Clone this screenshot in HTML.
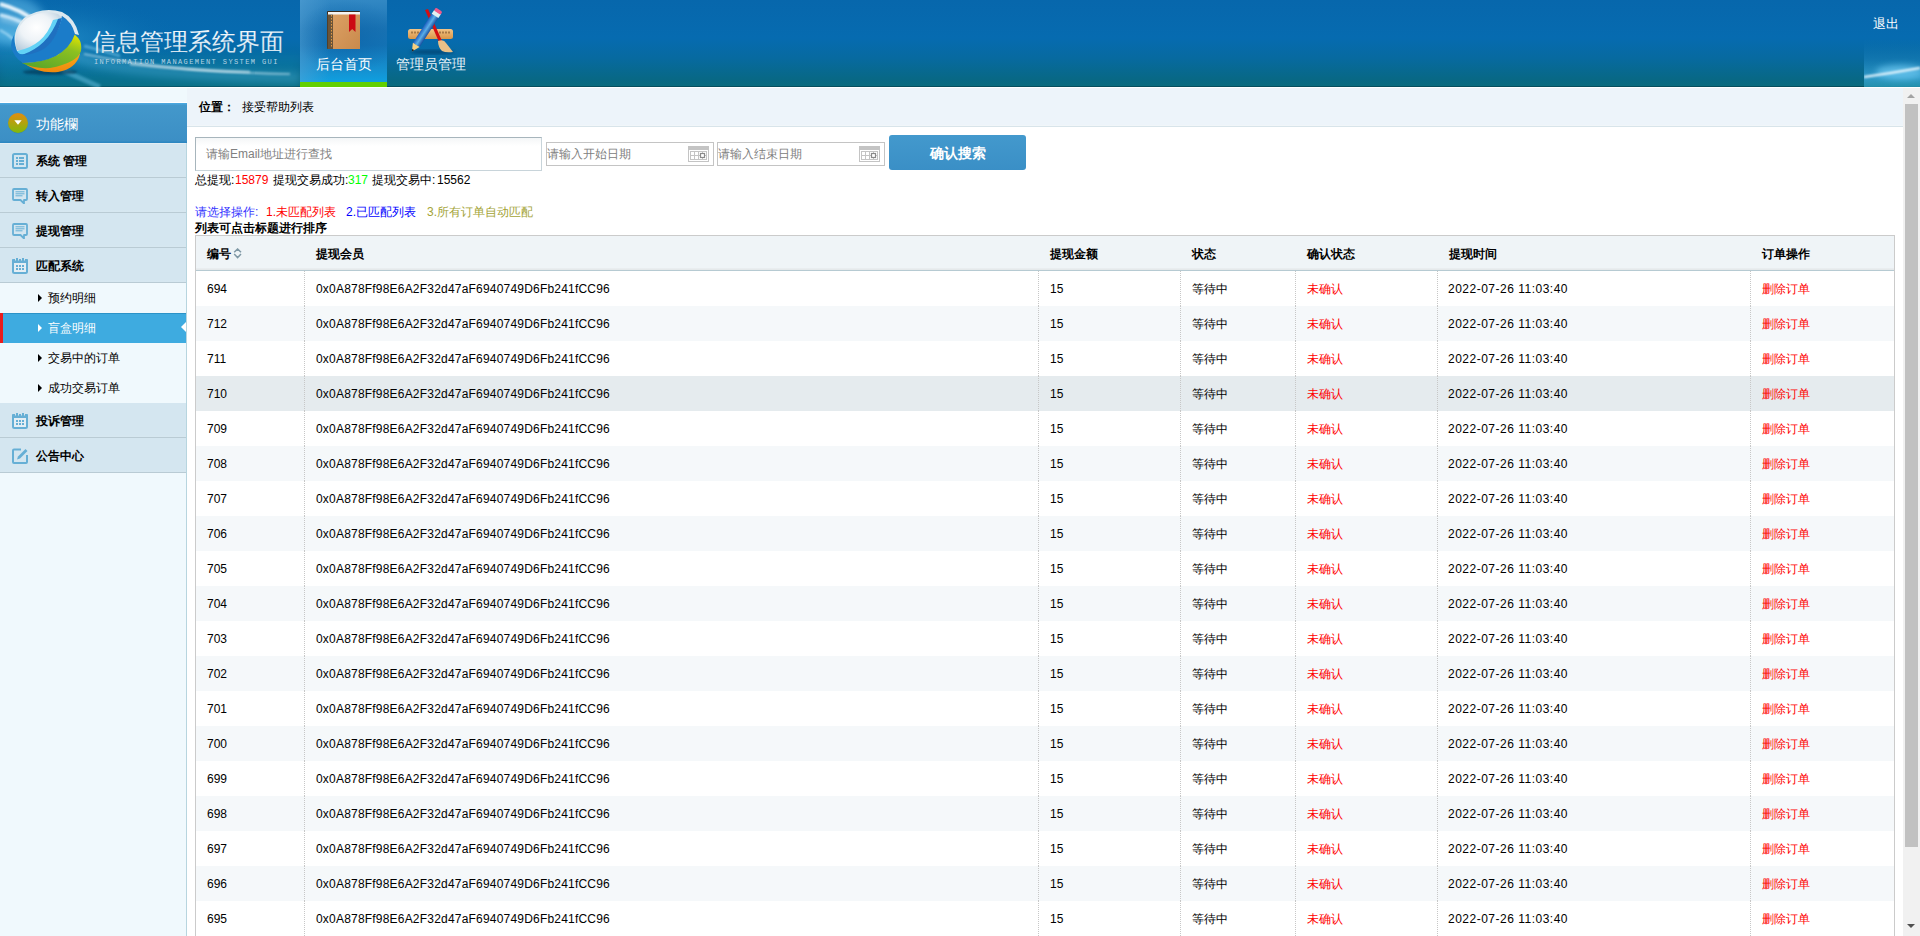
<!DOCTYPE html><html><head><meta charset="utf-8"><style>
*{margin:0;padding:0}
html,body{width:1920px;height:936px;overflow:hidden;background:#fff;font-family:"Liberation Sans",sans-serif;font-size:12px;color:#000}
.a{position:absolute}
#top{position:absolute;left:0;top:0;width:1920px;height:87px;
 background:linear-gradient(to bottom,#0767ac 0px,#066bb0 38px,#076aa0 58px,#086884 80px,#0a6b7e 86px,#064e5e 86px,#064e5e 87px)}
#topline{position:absolute;left:0;top:87px;width:1920px;height:1px;background:#fff}
.navt{top:55px;width:87px;text-align:center;font-size:14px;line-height:18px;color:#e6f2f8}
#left{position:absolute;left:0;top:88px;width:187px;height:848px;background:#f0f9fd}
#lbd{position:absolute;left:186px;top:55px;width:1px;height:793px;background:#b7d5df}
.dd{position:absolute;left:0;width:186px;height:34px;border-bottom:1px solid #b9cbd4;background:linear-gradient(#d4e6f0 0,#d4e6f0 32px,#d6e7f0 33px);font-weight:bold;font-size:12px;line-height:37px;color:#000}
.dd .t{position:absolute;left:36px;top:0}
.dd svg{position:absolute;left:12px;top:10px}
.sub{position:absolute;left:0;width:186px;height:30px;line-height:30px;font-size:12px;color:#000}
.sub .tri{position:absolute;left:38px;top:11px;width:0;height:0;border-left:4px solid #000;border-top:4px solid transparent;border-bottom:4px solid transparent}
.sub .t{position:absolute;left:48px;top:0}
.sub.active{background:linear-gradient(#2b93c8 0,#2b93c8 1px,#3eabe0 1px);color:#fff}
.sub.active .tri{border-left-color:#fff}
.place{position:absolute;left:187px;top:88px;width:1716px;height:38px;background:linear-gradient(#edf4fa 0,#edf4fa 37px,#f1f6f9 37px);border-bottom:1px solid #d8e4ea}
#sb{position:absolute;left:1903px;top:88px;width:17px;height:848px;background:#f1f1f1}
.th{position:absolute;top:236px;height:34px;line-height:36px;font-weight:bold}
.row{position:absolute;left:196px;width:1698px;height:35px;line-height:35px}
.row.odd{background:#f5f8fa}
.row.hov{background:#e5ebee}
.c{position:absolute;top:0;height:35px;line-height:37px;border-right:1px dotted #c7c7c7;text-indent:11px;white-space:nowrap}
.ad{letter-spacing:0.2px}
.dt{letter-spacing:0.5px;margin-left:-1px}
.red{color:#f00}
.date{position:absolute;top:142px;width:166px;height:22px;border:1px solid #c4c4c4;background:#fff;color:#808080;line-height:22px;font-size:12px}
</style></head><body>
<div id="top">
<svg class="a" style="left:0;top:0" width="300" height="87" viewBox="0 0 300 87">
<defs>
<radialGradient id="lg1" cx="0.12" cy="0.45" r="0.5"><stop offset="0" stop-color="#3fb0e0" stop-opacity="0.55"/><stop offset="1" stop-color="#0a6aa8" stop-opacity="0"/></radialGradient>
<radialGradient id="sph" cx="0.45" cy="0.4" r="0.7"><stop offset="0" stop-color="#ffffff"/><stop offset="0.5" stop-color="#eef3f7"/><stop offset="1" stop-color="#b4cadb"/></radialGradient>
<linearGradient id="grn" x1="0.8" y1="0" x2="0.2" y2="1"><stop offset="0" stop-color="#e0e400"/><stop offset="0.35" stop-color="#8cc021"/><stop offset="1" stop-color="#5aa62a"/></linearGradient>
<linearGradient id="org" x1="0" y1="0" x2="0" y2="1"><stop offset="0" stop-color="#f8b41a"/><stop offset="1" stop-color="#f0880e"/></linearGradient>
<linearGradient id="blu" x1="0" y1="0" x2="0" y2="1"><stop offset="0" stop-color="#1e78c4"/><stop offset="1" stop-color="#1a7cca"/></linearGradient>
<filter id="bl" x="-20%" y="-50%" width="140%" height="200%"><feGaussianBlur stdDeviation="1.2"/></filter>
<filter id="bl2" x="-20%" y="-50%" width="140%" height="200%"><feGaussianBlur stdDeviation="4"/></filter>
<filter id="bl3" x="-50%" y="-50%" width="200%" height="200%"><feGaussianBlur stdDeviation="2.5"/></filter>
<linearGradient id="ttl" x1="0" y1="0" x2="0" y2="1"><stop offset="0" stop-color="#f4f9fc"/><stop offset="1" stop-color="#cfe1ec"/></linearGradient>
</defs>
<rect x="0" y="0" width="300" height="87" fill="url(#lg1)"/>
<rect x="0" y="55" width="300" height="32" fill="#0e8ab0" opacity="0.25" filter="url(#bl2)"/>
<path d="M-5 30 Q40 42 80 58 T300 78" stroke="#6cc8f0" stroke-width="10" fill="none" opacity="0.3" filter="url(#bl2)"/>
<ellipse cx="10" cy="20" rx="34" ry="24" fill="#6cc4f0" opacity="0.5" filter="url(#bl2)"/>
<path d="M0 4 Q22 10 36 22" stroke="#f4fbff" stroke-width="4" fill="none" opacity="0.9" filter="url(#bl)"/>
<path d="M0 15 Q18 19 28 26" stroke="#e8f6ff" stroke-width="3.5" fill="none" opacity="0.8" filter="url(#bl)"/>
<path d="M0 30 Q8 34 14 40" stroke="#c8ecff" stroke-width="2" fill="none" opacity="0.6" filter="url(#bl)"/>
<path d="M0 18 Q20 22 40 30" stroke="#bfe6fb" stroke-width="6" fill="none" opacity="0.45" filter="url(#bl3)"/>
<path d="M84 54 Q170 72 290 74" stroke="#e6f7ff" stroke-width="1.6" fill="none" opacity="0.6" filter="url(#bl)"/>
<path d="M130 64 Q190 71 250 72" stroke="#ffffff" stroke-width="2.5" fill="none" opacity="0.5" filter="url(#bl)"/>
<path d="M62 70 Q80 78 100 87" stroke="#6fc6ea" stroke-width="5" fill="none" opacity="0.45" filter="url(#bl)"/>
<path d="M84 46 Q100 50 120 56" stroke="#8fd6f5" stroke-width="3" fill="none" opacity="0.45" filter="url(#bl)"/>
<ellipse cx="50" cy="72" rx="27" ry="3" fill="#002a48" opacity="0.55" filter="url(#bl)"/>
<path d="M22 62 Q38 74 58 72 Q76 69 80 54 L70 48 Q50 62 22 62Z" fill="url(#org)"/>
<path d="M72 33 Q83 39 81 51 Q77 63 50 68 Q34 69 22 63 Q46 62 58 54 Q70 46 72 33Z" fill="url(#grn)"/>
<path d="M72 33 Q70 47 58 55 Q44 62 22 63 Q46 60 56 52 Q68 44 72 33Z" fill="#d8e200"/>
<path d="M62 16 Q73 22 75 34 Q70 48 56 56 Q42 63 23 63 Q13 57 11 46 Q11 40 14 35 Q14 46 18 51 Q42 46 55 26Z" fill="#1b7cc9"/>
<path d="M17 51 Q10 32 24 18 Q42 6 62 12 Q75 18 79 35 L75 34 Q72 22 62 16 Q52 40 40 47 Q28 52 17 51Z" fill="#dce8ef"/>
<path d="M17 50 Q12 32 26 19 Q42 9 58 14 L62 18 Q52 40 40 47 Q28 52 17 50Z" fill="url(#sph)"/>
<path d="M53 20 L62 18 Q56 40 42 49 Q30 55 20 54 Q18 53 17 51 Q44 46 53 20Z" fill="#62d2f6"/>
<path d="M58 19 L62 18 Q56 42 42 50 Q32 55 22 55 Q48 46 58 19Z" fill="#1f70c0"/>
<text x="92" y="50" font-family="Liberation Sans" font-size="24" fill="url(#ttl)">信息管理系统界面</text>
<text x="94" y="63.5" font-family="Liberation Mono" font-size="7" letter-spacing="1.4" fill="#b6d3e3">INFORMATION MANAGEMENT SYSTEM GUI</text>
</svg>
<div class="a" style="left:300px;top:0;width:87px;height:82px;background:radial-gradient(ellipse 60% 45% at 55% 45%,rgba(10,95,165,0.55),rgba(10,95,165,0)),linear-gradient(to right,rgba(90,165,215,0.5),rgba(90,165,215,0) 35%),linear-gradient(to bottom,#3288c4 0%,#1a74b4 35%,#1474b6 55%,#1590d0 85%,#0fa0e0 100%)"></div>
<div class="a" style="left:300px;top:82px;width:87px;height:5px;background:#62cf02"></div>
<svg class="a" style="left:326px;top:10px" width="36" height="42" viewBox="0 0 36 42">
<defs><linearGradient id="bk" x1="0" y1="0" x2="1" y2="1"><stop offset="0" stop-color="#dca064"/><stop offset="1" stop-color="#c98a4c"/></linearGradient></defs>
<rect x="1" y="1" width="33" height="38" rx="1" fill="#3b2c1e"/>
<rect x="7" y="4" width="27" height="35" fill="url(#bk)"/>
<rect x="1.5" y="4" width="5.5" height="35" fill="#6b5439"/>
<line x1="5.5" y1="5" x2="5.5" y2="38" stroke="#e39a45" stroke-width="1" stroke-dasharray="1.5 1.5"/>
<rect x="2" y="2" width="32" height="2.5" fill="#f5f5f5"/>
<path d="M23 4.5H29.5V22L26.2 19L23 22Z" fill="#cc0a14"/>
</svg>
<svg class="a" style="left:404px;top:6px" width="54" height="50" viewBox="0 0 54 50">
<defs><linearGradient id="rl" x1="0" y1="0" x2="0" y2="1"><stop offset="0" stop-color="#f2c486"/><stop offset="1" stop-color="#d99648"/></linearGradient>
<linearGradient id="pc" x1="0" y1="0" x2="1" y2="0"><stop offset="0" stop-color="#1e5fc0"/><stop offset="0.5" stop-color="#5aaee8"/><stop offset="1" stop-color="#1a4fa0"/></linearGradient>
<filter id="sh"><feGaussianBlur stdDeviation="1.5"/></filter></defs>
<ellipse cx="28" cy="46" rx="22" ry="2.5" fill="#003a66" opacity="0.6" filter="url(#sh)"/>
<rect x="4" y="23" width="45" height="10" rx="2.5" fill="url(#rl)"/>
<path d="M8 25.5V27.5M11 25.5V27.5M14 25.5V27.5M36 25.5V27.5M39 25.5V27.5M42 25.5V27.5M45 25.5V27.5" stroke="#6b4018" stroke-width="1"/>
<path d="M21 4 L24 3 L38 35 L35 36Z" fill="#d40f12"/>
<path d="M34 35 Q40 33 42 37 Q46 42 49 46 Q42 47 38 45 Q34 41 34 35Z" fill="#e8c088"/>
<g transform="rotate(33 20 26)"><rect x="16.5" y="5" width="8" height="36" fill="url(#pc)"/><rect x="16.5" y="2" width="8" height="4.5" fill="#e0f0f0"/><rect x="16.5" y="-1" width="8" height="3.5" rx="1.5" fill="#f05a8a"/><path d="M16.5 41 L24.5 41 L20.5 49Z" fill="#f8d080"/><path d="M19.2 46.5 L21.8 46.5 L20.5 49Z" fill="#222"/></g>
</svg>
<div class="a navt" style="left:300px;color:#fff">后台首页</div>
<div class="a navt" style="left:387px">管理员管理</div>
<svg class="a" style="left:1864px;top:0" width="56" height="87" viewBox="0 0 56 87">
<defs><linearGradient id="rh" x1="0" y1="0" x2="0" y2="1"><stop offset="0" stop-color="#0a70b0" stop-opacity="0"/><stop offset="0.45" stop-color="#1a80bb" stop-opacity="0.6"/><stop offset="0.8" stop-color="#3aa6d8" stop-opacity="0.8"/><stop offset="1" stop-color="#2a9ab8" stop-opacity="0.8"/></linearGradient>
<filter id="rb" x="-50%" y="-200%" width="200%" height="500%"><feGaussianBlur stdDeviation="0.8"/></filter><filter id="rb2" x="-50%" y="-100%" width="200%" height="300%"><feGaussianBlur stdDeviation="3"/></filter></defs>
<rect x="0" y="38" width="56" height="49" fill="url(#rh)"/>
<ellipse cx="36" cy="72" rx="24" ry="7" fill="#7fd8ff" opacity="0.6" filter="url(#rb2)"/>
<path d="M0 77 Q28 73 56 68" stroke="#f4fbff" stroke-width="2.2" fill="none" filter="url(#rb)"/>
</svg>
<div class="a" style="left:1873px;top:15px;color:#fff;font-size:13px;line-height:18px">退出</div>
</div><div id="topline"></div>
<div id="left">
<div id="lbd"></div><div class="a" style="left:0;top:14px;width:187px;height:1px;background:#fff"></div><div class="a" style="left:0;top:15px;width:187px;height:40px;background:linear-gradient(#4ba7de 0,#4ba7de 1px,#4398cb 2px,#3c8fc5 38px,#2d87c1 39px,#2d87c1 40px);color:#fff;font-size:14px;line-height:40px"><svg class="a" style="left:7px;top:9px" width="22" height="22" viewBox="0 0 22 22">
<defs><linearGradient id="ci" x1="0" y1="0" x2="0" y2="1"><stop offset="0" stop-color="#e38c10"/><stop offset="1" stop-color="#7fba0c"/></linearGradient></defs>
<circle cx="11" cy="11.5" r="10" fill="#2a6e9c" opacity="0.4"/>
<circle cx="11" cy="11" r="10" fill="url(#ci)"/>
<path d="M7.3 8.2H14.7L11 12.8Z" fill="#fff"/>
</svg><span class="a" style="left:36px;top:1px">功能欄</span></div>
<div class="dd" style="top:55px"><svg width="16" height="16" viewBox="0 0 16 16"><rect x="1" y="1" width="14" height="14" rx="1.5" fill="none" stroke="#66afd5" stroke-width="2"/><rect x="4" y="4" width="2" height="2" fill="#66afd5"/><rect x="7" y="4" width="5" height="2" fill="#66afd5"/><rect x="4" y="7" width="2" height="2" fill="#66afd5"/><rect x="7" y="7" width="5" height="2" fill="#66afd5"/><rect x="4" y="10" width="2" height="2" fill="#66afd5"/><rect x="7" y="10" width="5" height="2" fill="#66afd5"/></svg><span class="t">系统 管理</span></div>
<div class="dd" style="top:90px"><svg width="16" height="16" viewBox="0 0 16 16"><path d="M2 1H14Q15 1 15 2V11Q15 12 14 12H12V15.5L8.5 12H2Q1 12 1 11V2Q1 1 2 1Z" fill="none" stroke="#66afd5" stroke-width="1.8" stroke-linejoin="round"/><rect x="3.5" y="3.3" width="9" height="1" fill="#66afd5"/><rect x="3.5" y="5.3" width="9" height="1" fill="#66afd5"/><rect x="3.5" y="7.3" width="7" height="1" fill="#66afd5"/></svg><span class="t">转入管理</span></div>
<div class="dd" style="top:125px"><svg width="16" height="16" viewBox="0 0 16 16"><path d="M2 1H14Q15 1 15 2V11Q15 12 14 12H12V15.5L8.5 12H2Q1 12 1 11V2Q1 1 2 1Z" fill="none" stroke="#66afd5" stroke-width="1.8" stroke-linejoin="round"/><rect x="3.5" y="3.3" width="9" height="1" fill="#66afd5"/><rect x="3.5" y="5.3" width="9" height="1" fill="#66afd5"/><rect x="3.5" y="7.3" width="7" height="1" fill="#66afd5"/></svg><span class="t">提现管理</span></div>
<div class="dd" style="top:160px"><svg width="16" height="17" viewBox="0 0 16 17"><rect x="1" y="2" width="14" height="13" rx="1.5" fill="#e4eef4" stroke="#66afd5" stroke-width="2"/><rect x="0" y="1" width="16" height="4" rx="1" fill="#66afd5"/><rect x="4" y="0" width="2" height="2" fill="#66afd5"/><rect x="10" y="0" width="2" height="2" fill="#66afd5"/><rect x="3" y="1" width="1" height="1.5" fill="#d5e6ef"/><rect x="6" y="1" width="1" height="1.5" fill="#d5e6ef"/><rect x="9" y="1" width="1" height="1.5" fill="#d5e6ef"/><rect x="12" y="1" width="1" height="1.5" fill="#d5e6ef"/><rect x="4" y="7" width="2" height="2" fill="#66afd5"/><rect x="7" y="7" width="2" height="2" fill="#66afd5"/><rect x="10" y="7" width="2" height="2" fill="#66afd5"/><rect x="4" y="10" width="2" height="2" fill="#66afd5"/><rect x="7" y="10" width="2" height="2" fill="#66afd5"/><rect x="10" y="10" width="2" height="2" fill="#66afd5"/></svg><span class="t">匹配系统</span></div>
<div class="a" style="left:0;top:55px;width:186px;height:1px;background:#e2edf3"></div>
<div class="sub" style="top:195px"><i class="tri"></i><span class="t">预约明细</span></div>
<div class="sub active" style="top:225px"><i class="a" style="left:0;top:0;width:3px;height:30px;background:#e91c1c"></i><i class="a" style="right:0;top:9px;width:0;height:0;border-right:5px solid #fff;border-top:5.5px solid transparent;border-bottom:5.5px solid transparent"></i><i class="tri"></i><span class="t">盲盒明细</span></div>
<div class="sub" style="top:255px"><i class="tri"></i><span class="t">交易中的订单</span></div>
<div class="sub" style="top:285px"><i class="tri"></i><span class="t">成功交易订单</span></div>
<div class="dd" style="top:315px"><svg width="16" height="17" viewBox="0 0 16 17"><rect x="1" y="2" width="14" height="13" rx="1.5" fill="#e4eef4" stroke="#66afd5" stroke-width="2"/><rect x="0" y="1" width="16" height="4" rx="1" fill="#66afd5"/><rect x="4" y="0" width="2" height="2" fill="#66afd5"/><rect x="10" y="0" width="2" height="2" fill="#66afd5"/><rect x="3" y="1" width="1" height="1.5" fill="#d5e6ef"/><rect x="6" y="1" width="1" height="1.5" fill="#d5e6ef"/><rect x="9" y="1" width="1" height="1.5" fill="#d5e6ef"/><rect x="12" y="1" width="1" height="1.5" fill="#d5e6ef"/><rect x="4" y="7" width="2" height="2" fill="#66afd5"/><rect x="7" y="7" width="2" height="2" fill="#66afd5"/><rect x="10" y="7" width="2" height="2" fill="#66afd5"/><rect x="4" y="10" width="2" height="2" fill="#66afd5"/><rect x="7" y="10" width="2" height="2" fill="#66afd5"/><rect x="10" y="10" width="2" height="2" fill="#66afd5"/></svg><span class="t">投诉管理</span></div>
<div class="dd" style="top:350px"><svg width="16" height="16" viewBox="0 0 16 16"><path d="M9 1.5H2Q1 1.5 1 2.5V14Q1 15 2 15H14Q15 15 15 14V7" fill="none" stroke="#66afd5" stroke-width="2"/><path d="M13.5 1L15.5 3L8 10.5L5 11.5L6 8.5Z" fill="#66afd5"/></svg><span class="t">公告中心</span></div>
</div>
<div class="place"><span class="a" style="left:12px;top:0;line-height:38px;font-weight:bold">位置：</span><span class="a" style="left:55px;top:0;line-height:38px">接受帮助列表</span></div>
<div class="a" style="left:195px;top:137px;width:345px;height:32px;border:1px solid #a7b5bc;border-right-color:#c8d4da;border-bottom-color:#c8d4da;background:linear-gradient(#f4f6f7,#fff 8px);color:#808080;font-size:12px;line-height:33px;text-indent:10px">请输Email地址进行查找</div>
<div class="date" style="left:546px">请输入开始日期<svg width="21" height="16" viewBox="0 0 21 16" style="position:absolute;left:141px;top:3px"><rect x="0.5" y="0.5" width="20" height="15" fill="#fff" stroke="#c4c4c4"/><rect x="0.5" y="0.5" width="20" height="3.5" fill="#c4c4c4"/><rect x="2.5" y="5.5" width="16" height="8" fill="none" stroke="#c4c4c4"/><line x1="6.5" y1="5.5" x2="6.5" y2="13.5" stroke="#c4c4c4"/><line x1="10.5" y1="5.5" x2="10.5" y2="13.5" stroke="#c4c4c4"/><line x1="14.5" y1="5.5" x2="14.5" y2="13.5" stroke="#c4c4c4"/><line x1="2.5" y1="9.5" x2="18.5" y2="9.5" stroke="#c4c4c4"/><rect x="12.5" y="7.5" width="4" height="4" fill="#fff" stroke="#8a8a8a" stroke-width="1.2"/></svg></div>
<div class="date" style="left:717px">请输入结束日期<svg width="21" height="16" viewBox="0 0 21 16" style="position:absolute;left:141px;top:3px"><rect x="0.5" y="0.5" width="20" height="15" fill="#fff" stroke="#c4c4c4"/><rect x="0.5" y="0.5" width="20" height="3.5" fill="#c4c4c4"/><rect x="2.5" y="5.5" width="16" height="8" fill="none" stroke="#c4c4c4"/><line x1="6.5" y1="5.5" x2="6.5" y2="13.5" stroke="#c4c4c4"/><line x1="10.5" y1="5.5" x2="10.5" y2="13.5" stroke="#c4c4c4"/><line x1="14.5" y1="5.5" x2="14.5" y2="13.5" stroke="#c4c4c4"/><line x1="2.5" y1="9.5" x2="18.5" y2="9.5" stroke="#c4c4c4"/><rect x="12.5" y="7.5" width="4" height="4" fill="#fff" stroke="#8a8a8a" stroke-width="1.2"/></svg></div>
<div class="a" style="left:889px;top:135px;width:137px;height:35px;border-radius:3px;background:linear-gradient(#4399cd,#3a8fc6);color:#fff;font-weight:bold;font-size:14px;line-height:37px;text-align:center">确认搜索</div>
<span style="position:absolute;top:173px;line-height:14px;white-space:nowrap;left:195px">总提现:</span><span style="position:absolute;top:173px;line-height:14px;white-space:nowrap;left:235px;color:#f00">15879</span><span style="position:absolute;top:173px;line-height:14px;white-space:nowrap;left:273px">提现交易成功:</span><span style="position:absolute;top:173px;line-height:14px;white-space:nowrap;left:348px;color:#0f0">317</span><span style="position:absolute;top:173px;line-height:14px;white-space:nowrap;left:372px">提现交易中:</span><span style="position:absolute;top:173px;line-height:14px;white-space:nowrap;left:437px">15562</span>
<span style="position:absolute;top:205px;line-height:14px;white-space:nowrap;left:195px;color:#3333ff">请选择操作:</span><span style="position:absolute;top:205px;line-height:14px;white-space:nowrap;left:266px;color:#f00">1.未匹配列表</span><span style="position:absolute;top:205px;line-height:14px;white-space:nowrap;left:346px;color:#00f">2.已匹配列表</span><span style="position:absolute;top:205px;line-height:14px;white-space:nowrap;left:427px;color:#a3a336">3.所有订单自动匹配</span>
<div class="a" style="left:195px;top:221px;line-height:14px;font-weight:bold;white-space:nowrap">列表可点击标题进行排序</div>
<div class="a" style="left:195px;top:235px;width:1698px;height:720px;border:1px solid #cbcbcb"></div>
<div class="a" style="left:196px;top:236px;width:1698px;height:34px;background:linear-gradient(#eff4f7 0,#eff4f7 32px,#ebeff2 32px,#e3e7e9 34px);border-bottom:1px solid #b6cad2"></div>
<div class="th" style="left:207px">编号</div>
<div class="th" style="left:316px">提现会员</div>
<div class="th" style="left:1050px">提现金额</div>
<div class="th" style="left:1192px">状态</div>
<div class="th" style="left:1307px">确认状态</div>
<div class="th" style="left:1449px">提现时间</div>
<div class="th" style="left:1762px">订单操作</div>
<svg class="a" style="left:233px;top:248px" width="10" height="11" viewBox="0 0 10 11"><path d="M1.2 4.3L4.6 1L8 4.3M1.2 6.1L4.6 9.6L8 6.1" fill="none" stroke="#7f98a5" stroke-width="1.5"/></svg>
<div class="row" style="top:271px">
<div class="c" style="left:0px;width:108px">694</div>
<div class="c" style="left:109px;width:733px"><span class="ad">0x0A878Ff98E6A2F32d47aF6940749D6Fb241fCC96</span></div>
<div class="c" style="left:843px;width:141px">15</div>
<div class="c" style="left:985px;width:114px">等待中</div>
<div class="c" style="left:1100px;width:141px"><span class="red">未确认</span></div>
<div class="c" style="left:1242px;width:312px"><span class="dt">2022-07-26 11:03:40</span></div>
<div class="c" style="left:1555px;width:142px;border-right:none"><span class="red">删除订单</span></div>
</div>
<div class="row odd" style="top:306px">
<div class="c" style="left:0px;width:108px">712</div>
<div class="c" style="left:109px;width:733px"><span class="ad">0x0A878Ff98E6A2F32d47aF6940749D6Fb241fCC96</span></div>
<div class="c" style="left:843px;width:141px">15</div>
<div class="c" style="left:985px;width:114px">等待中</div>
<div class="c" style="left:1100px;width:141px"><span class="red">未确认</span></div>
<div class="c" style="left:1242px;width:312px"><span class="dt">2022-07-26 11:03:40</span></div>
<div class="c" style="left:1555px;width:142px;border-right:none"><span class="red">删除订单</span></div>
</div>
<div class="row" style="top:341px">
<div class="c" style="left:0px;width:108px">711</div>
<div class="c" style="left:109px;width:733px"><span class="ad">0x0A878Ff98E6A2F32d47aF6940749D6Fb241fCC96</span></div>
<div class="c" style="left:843px;width:141px">15</div>
<div class="c" style="left:985px;width:114px">等待中</div>
<div class="c" style="left:1100px;width:141px"><span class="red">未确认</span></div>
<div class="c" style="left:1242px;width:312px"><span class="dt">2022-07-26 11:03:40</span></div>
<div class="c" style="left:1555px;width:142px;border-right:none"><span class="red">删除订单</span></div>
</div>
<div class="row hov" style="top:376px">
<div class="c" style="left:0px;width:108px">710</div>
<div class="c" style="left:109px;width:733px"><span class="ad">0x0A878Ff98E6A2F32d47aF6940749D6Fb241fCC96</span></div>
<div class="c" style="left:843px;width:141px">15</div>
<div class="c" style="left:985px;width:114px">等待中</div>
<div class="c" style="left:1100px;width:141px"><span class="red">未确认</span></div>
<div class="c" style="left:1242px;width:312px"><span class="dt">2022-07-26 11:03:40</span></div>
<div class="c" style="left:1555px;width:142px;border-right:none"><span class="red">删除订单</span></div>
</div>
<div class="row" style="top:411px">
<div class="c" style="left:0px;width:108px">709</div>
<div class="c" style="left:109px;width:733px"><span class="ad">0x0A878Ff98E6A2F32d47aF6940749D6Fb241fCC96</span></div>
<div class="c" style="left:843px;width:141px">15</div>
<div class="c" style="left:985px;width:114px">等待中</div>
<div class="c" style="left:1100px;width:141px"><span class="red">未确认</span></div>
<div class="c" style="left:1242px;width:312px"><span class="dt">2022-07-26 11:03:40</span></div>
<div class="c" style="left:1555px;width:142px;border-right:none"><span class="red">删除订单</span></div>
</div>
<div class="row odd" style="top:446px">
<div class="c" style="left:0px;width:108px">708</div>
<div class="c" style="left:109px;width:733px"><span class="ad">0x0A878Ff98E6A2F32d47aF6940749D6Fb241fCC96</span></div>
<div class="c" style="left:843px;width:141px">15</div>
<div class="c" style="left:985px;width:114px">等待中</div>
<div class="c" style="left:1100px;width:141px"><span class="red">未确认</span></div>
<div class="c" style="left:1242px;width:312px"><span class="dt">2022-07-26 11:03:40</span></div>
<div class="c" style="left:1555px;width:142px;border-right:none"><span class="red">删除订单</span></div>
</div>
<div class="row" style="top:481px">
<div class="c" style="left:0px;width:108px">707</div>
<div class="c" style="left:109px;width:733px"><span class="ad">0x0A878Ff98E6A2F32d47aF6940749D6Fb241fCC96</span></div>
<div class="c" style="left:843px;width:141px">15</div>
<div class="c" style="left:985px;width:114px">等待中</div>
<div class="c" style="left:1100px;width:141px"><span class="red">未确认</span></div>
<div class="c" style="left:1242px;width:312px"><span class="dt">2022-07-26 11:03:40</span></div>
<div class="c" style="left:1555px;width:142px;border-right:none"><span class="red">删除订单</span></div>
</div>
<div class="row odd" style="top:516px">
<div class="c" style="left:0px;width:108px">706</div>
<div class="c" style="left:109px;width:733px"><span class="ad">0x0A878Ff98E6A2F32d47aF6940749D6Fb241fCC96</span></div>
<div class="c" style="left:843px;width:141px">15</div>
<div class="c" style="left:985px;width:114px">等待中</div>
<div class="c" style="left:1100px;width:141px"><span class="red">未确认</span></div>
<div class="c" style="left:1242px;width:312px"><span class="dt">2022-07-26 11:03:40</span></div>
<div class="c" style="left:1555px;width:142px;border-right:none"><span class="red">删除订单</span></div>
</div>
<div class="row" style="top:551px">
<div class="c" style="left:0px;width:108px">705</div>
<div class="c" style="left:109px;width:733px"><span class="ad">0x0A878Ff98E6A2F32d47aF6940749D6Fb241fCC96</span></div>
<div class="c" style="left:843px;width:141px">15</div>
<div class="c" style="left:985px;width:114px">等待中</div>
<div class="c" style="left:1100px;width:141px"><span class="red">未确认</span></div>
<div class="c" style="left:1242px;width:312px"><span class="dt">2022-07-26 11:03:40</span></div>
<div class="c" style="left:1555px;width:142px;border-right:none"><span class="red">删除订单</span></div>
</div>
<div class="row odd" style="top:586px">
<div class="c" style="left:0px;width:108px">704</div>
<div class="c" style="left:109px;width:733px"><span class="ad">0x0A878Ff98E6A2F32d47aF6940749D6Fb241fCC96</span></div>
<div class="c" style="left:843px;width:141px">15</div>
<div class="c" style="left:985px;width:114px">等待中</div>
<div class="c" style="left:1100px;width:141px"><span class="red">未确认</span></div>
<div class="c" style="left:1242px;width:312px"><span class="dt">2022-07-26 11:03:40</span></div>
<div class="c" style="left:1555px;width:142px;border-right:none"><span class="red">删除订单</span></div>
</div>
<div class="row" style="top:621px">
<div class="c" style="left:0px;width:108px">703</div>
<div class="c" style="left:109px;width:733px"><span class="ad">0x0A878Ff98E6A2F32d47aF6940749D6Fb241fCC96</span></div>
<div class="c" style="left:843px;width:141px">15</div>
<div class="c" style="left:985px;width:114px">等待中</div>
<div class="c" style="left:1100px;width:141px"><span class="red">未确认</span></div>
<div class="c" style="left:1242px;width:312px"><span class="dt">2022-07-26 11:03:40</span></div>
<div class="c" style="left:1555px;width:142px;border-right:none"><span class="red">删除订单</span></div>
</div>
<div class="row odd" style="top:656px">
<div class="c" style="left:0px;width:108px">702</div>
<div class="c" style="left:109px;width:733px"><span class="ad">0x0A878Ff98E6A2F32d47aF6940749D6Fb241fCC96</span></div>
<div class="c" style="left:843px;width:141px">15</div>
<div class="c" style="left:985px;width:114px">等待中</div>
<div class="c" style="left:1100px;width:141px"><span class="red">未确认</span></div>
<div class="c" style="left:1242px;width:312px"><span class="dt">2022-07-26 11:03:40</span></div>
<div class="c" style="left:1555px;width:142px;border-right:none"><span class="red">删除订单</span></div>
</div>
<div class="row" style="top:691px">
<div class="c" style="left:0px;width:108px">701</div>
<div class="c" style="left:109px;width:733px"><span class="ad">0x0A878Ff98E6A2F32d47aF6940749D6Fb241fCC96</span></div>
<div class="c" style="left:843px;width:141px">15</div>
<div class="c" style="left:985px;width:114px">等待中</div>
<div class="c" style="left:1100px;width:141px"><span class="red">未确认</span></div>
<div class="c" style="left:1242px;width:312px"><span class="dt">2022-07-26 11:03:40</span></div>
<div class="c" style="left:1555px;width:142px;border-right:none"><span class="red">删除订单</span></div>
</div>
<div class="row odd" style="top:726px">
<div class="c" style="left:0px;width:108px">700</div>
<div class="c" style="left:109px;width:733px"><span class="ad">0x0A878Ff98E6A2F32d47aF6940749D6Fb241fCC96</span></div>
<div class="c" style="left:843px;width:141px">15</div>
<div class="c" style="left:985px;width:114px">等待中</div>
<div class="c" style="left:1100px;width:141px"><span class="red">未确认</span></div>
<div class="c" style="left:1242px;width:312px"><span class="dt">2022-07-26 11:03:40</span></div>
<div class="c" style="left:1555px;width:142px;border-right:none"><span class="red">删除订单</span></div>
</div>
<div class="row" style="top:761px">
<div class="c" style="left:0px;width:108px">699</div>
<div class="c" style="left:109px;width:733px"><span class="ad">0x0A878Ff98E6A2F32d47aF6940749D6Fb241fCC96</span></div>
<div class="c" style="left:843px;width:141px">15</div>
<div class="c" style="left:985px;width:114px">等待中</div>
<div class="c" style="left:1100px;width:141px"><span class="red">未确认</span></div>
<div class="c" style="left:1242px;width:312px"><span class="dt">2022-07-26 11:03:40</span></div>
<div class="c" style="left:1555px;width:142px;border-right:none"><span class="red">删除订单</span></div>
</div>
<div class="row odd" style="top:796px">
<div class="c" style="left:0px;width:108px">698</div>
<div class="c" style="left:109px;width:733px"><span class="ad">0x0A878Ff98E6A2F32d47aF6940749D6Fb241fCC96</span></div>
<div class="c" style="left:843px;width:141px">15</div>
<div class="c" style="left:985px;width:114px">等待中</div>
<div class="c" style="left:1100px;width:141px"><span class="red">未确认</span></div>
<div class="c" style="left:1242px;width:312px"><span class="dt">2022-07-26 11:03:40</span></div>
<div class="c" style="left:1555px;width:142px;border-right:none"><span class="red">删除订单</span></div>
</div>
<div class="row" style="top:831px">
<div class="c" style="left:0px;width:108px">697</div>
<div class="c" style="left:109px;width:733px"><span class="ad">0x0A878Ff98E6A2F32d47aF6940749D6Fb241fCC96</span></div>
<div class="c" style="left:843px;width:141px">15</div>
<div class="c" style="left:985px;width:114px">等待中</div>
<div class="c" style="left:1100px;width:141px"><span class="red">未确认</span></div>
<div class="c" style="left:1242px;width:312px"><span class="dt">2022-07-26 11:03:40</span></div>
<div class="c" style="left:1555px;width:142px;border-right:none"><span class="red">删除订单</span></div>
</div>
<div class="row odd" style="top:866px">
<div class="c" style="left:0px;width:108px">696</div>
<div class="c" style="left:109px;width:733px"><span class="ad">0x0A878Ff98E6A2F32d47aF6940749D6Fb241fCC96</span></div>
<div class="c" style="left:843px;width:141px">15</div>
<div class="c" style="left:985px;width:114px">等待中</div>
<div class="c" style="left:1100px;width:141px"><span class="red">未确认</span></div>
<div class="c" style="left:1242px;width:312px"><span class="dt">2022-07-26 11:03:40</span></div>
<div class="c" style="left:1555px;width:142px;border-right:none"><span class="red">删除订单</span></div>
</div>
<div class="row" style="top:901px">
<div class="c" style="left:0px;width:108px">695</div>
<div class="c" style="left:109px;width:733px"><span class="ad">0x0A878Ff98E6A2F32d47aF6940749D6Fb241fCC96</span></div>
<div class="c" style="left:843px;width:141px">15</div>
<div class="c" style="left:985px;width:114px">等待中</div>
<div class="c" style="left:1100px;width:141px"><span class="red">未确认</span></div>
<div class="c" style="left:1242px;width:312px"><span class="dt">2022-07-26 11:03:40</span></div>
<div class="c" style="left:1555px;width:142px;border-right:none"><span class="red">删除订单</span></div>
</div>
<div id="sb"><div class="a" style="left:2px;top:16px;width:13px;height:743px;background:#c1c1c1"></div>
<div class="a" style="left:4px;top:6px;width:0;height:0;border-left:4px solid transparent;border-right:4px solid transparent;border-bottom:4px solid #a3a3a3"></div>
<div class="a" style="left:4px;top:836px;width:0;height:0;border-left:4px solid transparent;border-right:4px solid transparent;border-top:4px solid #505050"></div></div>
</body></html>
